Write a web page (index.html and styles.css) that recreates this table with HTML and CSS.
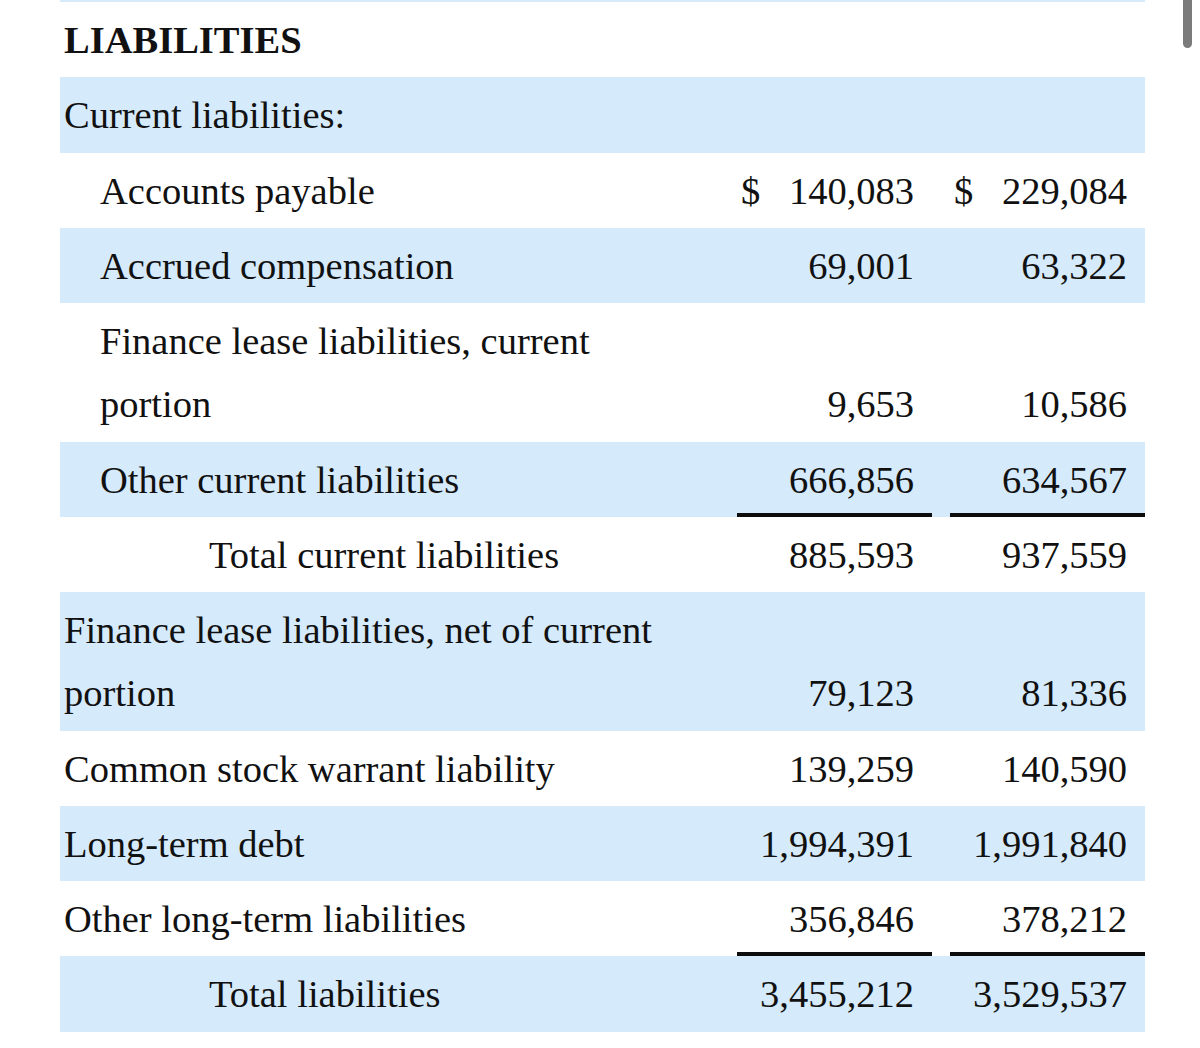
FILE: index.html
```html
<!DOCTYPE html>
<html lang="en">
<head>
<meta charset="utf-8">
<title>Liabilities</title>
<link rel="stylesheet" href="styles.css">
</head>
<body>
<div class="page">
  <div class="prev-row"></div>
  <table class="sheet">
    <colgroup>
      <col class="c-label">
      <col class="c-gap">
      <col class="c-num">
      <col class="c-gap">
      <col class="c-num">
    </colgroup>
    <tbody>
      <tr>
        <td class="label heading" colspan="5">LIABILITIES</td>
      </tr>
      <tr class="shade">
        <td class="label" colspan="5">Current liabilities:</td>
      </tr>
      <tr>
        <td class="label l1">Accounts payable</td>
        <td></td>
        <td class="num"><span class="cur">$</span>140,083</td>
        <td></td>
        <td class="num"><span class="cur">$</span>229,084</td>
      </tr>
      <tr class="shade">
        <td class="label l1">Accrued compensation</td>
        <td></td>
        <td class="num">69,001</td>
        <td></td>
        <td class="num">63,322</td>
      </tr>
      <tr class="tall">
        <td class="label l1">Finance lease liabilities, current portion</td>
        <td></td>
        <td class="num">9,653</td>
        <td></td>
        <td class="num">10,586</td>
      </tr>
      <tr class="shade">
        <td class="label l1">Other current liabilities</td>
        <td></td>
        <td class="num rule">666,856</td>
        <td></td>
        <td class="num rule">634,567</td>
      </tr>
      <tr>
        <td class="label l3">Total current liabilities</td>
        <td></td>
        <td class="num">885,593</td>
        <td></td>
        <td class="num">937,559</td>
      </tr>
      <tr class="shade tall">
        <td class="label">Finance lease liabilities, net of current portion</td>
        <td></td>
        <td class="num">79,123</td>
        <td></td>
        <td class="num">81,336</td>
      </tr>
      <tr>
        <td class="label">Common stock warrant liability</td>
        <td></td>
        <td class="num">139,259</td>
        <td></td>
        <td class="num">140,590</td>
      </tr>
      <tr class="shade">
        <td class="label">Long-term debt</td>
        <td></td>
        <td class="num">1,994,391</td>
        <td></td>
        <td class="num">1,991,840</td>
      </tr>
      <tr>
        <td class="label">Other long-term liabilities</td>
        <td></td>
        <td class="num rule">356,846</td>
        <td></td>
        <td class="num rule">378,212</td>
      </tr>
      <tr class="shade">
        <td class="label l3">Total liabilities</td>
        <td></td>
        <td class="num">3,455,212</td>
        <td></td>
        <td class="num">3,529,537</td>
      </tr>
    </tbody>
  </table>
  <div class="scroll-indicator"></div>
</div>
</body>
</html>
```

FILE: styles.css
```css
html, body {
  margin: 0;
  padding: 0;
  background: #ffffff;
}

body {
  font-family: "Liberation Serif", "Times New Roman", serif;
  color: #111111;
  width: 1200px;
  height: 1048px;
  overflow: hidden;
}

.page {
  position: relative;
  padding-left: 60px;
}

.prev-row {
  width: 1085px;
  height: 2px;
  background: #d5eafb;
}

.sheet {
  width: 1085px;
  table-layout: fixed;
  border-collapse: separate;
  border-spacing: 0;
  font-size: 38.5px;
  line-height: 63.25px;
}

.c-label { width: 659px; }
.c-gap { width: 18px; }
.c-num { width: 195px; }

.sheet td {
  padding: 7px 0 5px;
  vertical-align: middle;
  white-space: normal;
}

.shade td {
  background: #d5eafb;
}

.label {
  padding-left: 4px !important;
  padding-right: 20px !important;
}

.label.l1 {
  padding-left: 40px !important;
}

.label.l3 {
  padding-left: 149px !important;
}

.heading {
  font-weight: bold;
}

.num {
  text-align: right;
  padding-right: 18px !important;
  white-space: nowrap;
}

.cur {
  float: left;
  padding-left: 4px;
}

.tall .num {
  vertical-align: bottom;
}

.num.rule {
  padding-bottom: 1px !important;
  border-bottom: 4px solid #0d0d0d;
}

.scroll-indicator {
  position: absolute;
  top: -6px;
  left: 1183px;
  width: 9px;
  height: 54px;
  border-radius: 5px;
  background: #7b7b7b;
}
```
